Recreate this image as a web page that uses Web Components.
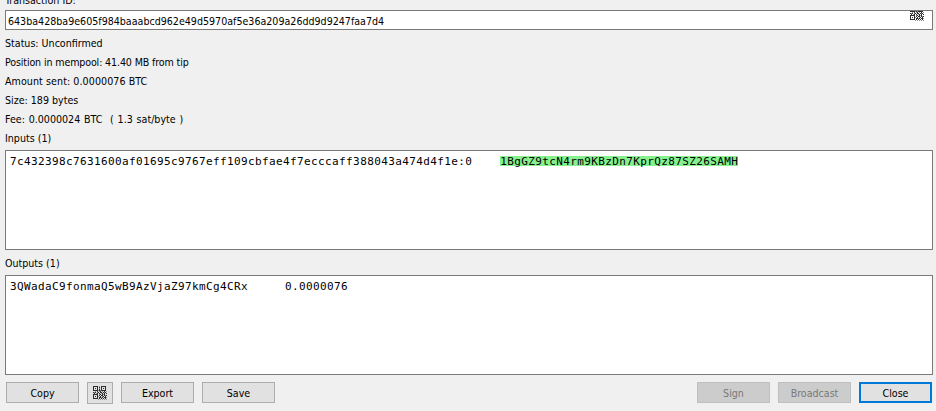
<!DOCTYPE html>
<html>
<head>
<meta charset="utf-8">
<title>Transaction</title>
<style>
  html, body { margin: 0; padding: 0; background: #f0f0f0; overflow: hidden; }
</style>
</head>
<body>
<tx-dialog></tx-dialog>

<script>
const UI_FONT = `"DejaVu Sans", "Liberation Sans", sans-serif`
const MONO_FONT = `"DejaVu Sans Mono", "Liberation Mono", monospace`

class QrIcon extends HTMLElement {
  constructor() {
    super()
    this._shadowRoot = this.attachShadow({ mode: 'open' })
  }

  connectedCallback() {
    // 14x14 pattern, one char per pixel: # dark, + mid grey, . empty
    const rows = [
      '#####.+.#####.',
      '#...#.#.#...#.',
      '#.#.#.+.#.#.#.',
      '#...#.#.#...#.',
      '#####+#+#####.',
      '..+.#.+#.+.#.+',
      '#+#.+#.##.#+#.',
      '.#.+#.#.+#.#.#',
      '#####.+#.#+#..',
      '#...#.#.##.#+#',
      '#.#.#+.#.+#.#.',
      '#...#.##+#.##+',
      '#####.#.#.#.#.',
      '.....+.+.+.+.+'
    ]
    let rects = ''
    rows.forEach((row, y) => {
      row.split('').forEach((c, x) => {
        if (c === '#') rects += `<rect x="${x}" y="${y}" width="1" height="1" fill="#2b2b2b"/>`
        if (c === '+') rects += `<rect x="${x}" y="${y}" width="1" height="1" fill="#8f8f8f"/>`
      })
    })
    this._shadowRoot.innerHTML = `
      <style>
        :host { display: block; width: 14px; height: 14px; }
        svg { display: block; }
      </style>
      <svg width="14" height="14" viewBox="0 0 14 14" shape-rendering="crispEdges">${rects}</svg>
    `
  }
}

class DlgButton extends HTMLElement {
  constructor() {
    super()
    this._shadowRoot = this.attachShadow({ mode: 'open' })
  }

  connectedCallback() {
    this._shadowRoot.innerHTML = `
      <style>
        :host {
          display: flex;
          align-items: center;
          justify-content: center;
          box-sizing: border-box;
          width: 73px;
          height: 21px;
          padding-top: 1px;
          background: #e1e1e1;
          border: 1px solid #adadad;
          color: #000;
          font: 10.6px ${UI_FONT};
          font-stretch: condensed;
        }
        :host([disabled]) {
          background: #cccccc;
          border-color: #bfbfbf;
          color: #787878;
        }
        :host([focused]) {
          border: 2px solid #0078d7;
        }
        :host([icon]) {
          width: 26px;
          height: 22px;
          padding-top: 0;
        }
      </style>
      <slot></slot>
    `
  }
}

class TextLine extends HTMLElement {
  constructor() {
    super()
    this._shadowRoot = this.attachShadow({ mode: 'open' })
  }

  connectedCallback() {
    this._shadowRoot.innerHTML = `
      <style>
        :host {
          display: block;
          height: 19px;
          color: #000;
          font: 10.6px/19px ${UI_FONT};
          font-stretch: condensed;
        }
        .line { white-space: pre; }
      </style>
      <div class="line"><slot></slot></div>
    `
  }
}

class TxField extends HTMLElement {
  constructor() {
    super()
    this._shadowRoot = this.attachShadow({ mode: 'open' })
  }

  connectedCallback() {
    this._shadowRoot.innerHTML = `
      <style>
        :host {
          display: block;
          position: relative;
          box-sizing: border-box;
          height: 20px;
          border: 1px solid #7a7a7a;
          background: #fff;
          overflow: hidden;
          padding-left: 2px;
          font: 10.6px/20px ${UI_FONT};
          font-stretch: condensed;
          color: #000;
        }
        qr-icon { position: absolute; right: 8px; top: -4px; }
      </style>
      <slot></slot>
      <qr-icon></qr-icon>
    `
  }
}

class TxList extends HTMLElement {
  constructor() {
    super()
    this._shadowRoot = this.attachShadow({ mode: 'open' })
  }

  connectedCallback() {
    this._shadowRoot.innerHTML = `
      <style>
        :host {
          display: block;
          box-sizing: border-box;
          height: 100px;
          border: 1px solid #7a7a7a;
          background: #fff;
          padding: 5px 4px 4px;
          font: 11px/11px ${MONO_FONT};
          letter-spacing: 0.38px;
          color: #000;
        }
        .rows { white-space: pre; }
      </style>
      <div class="rows"><slot></slot></div>
    `
  }
}

class TxDialog extends HTMLElement {
  constructor() {
    super()
    this._shadowRoot = this.attachShadow({ mode: 'open' })
  }

  connectedCallback() {
    this.render()
  }

  render() {
    const txid = '643ba428ba9e605f984baaabcd962e49d5970af5e36a209a26dd9d9247faa7d4'
    const prevout = '7c432398c7631600af01695c9767eff109cbfae4f7ecccaff388043a474d4f1e:0'
    this._shadowRoot.innerHTML = `
      <style>
        :host {
          display: flex;
          flex-direction: column;
          justify-content: flex-end;
          box-sizing: border-box;
          width: 936px;
          height: 411px;
          padding: 0 3px 7px 5px;
          overflow: hidden;
          background: #f0f0f0;
        }
        .info { margin-top: 4px; flex: none; }
        tx-list { margin-top: 2px; flex: none; }
        tx-field, text-line { flex: none; }
        .outputs-label { margin-top: 4px; }
        .buttons {
          display: flex;
          align-items: flex-start;
          flex: none;
          height: 22px;
          margin-top: 7px;
          padding: 0 1px;
          gap: 8px;
        }
        .spacer { flex: 1; }
        .addr {
          display: inline-block;
          height: 10px;
          background: #86f08f;
        }
        .amount { margin-left: 37px; }
      </style>
      <text-line>Transaction ID:</text-line>
      <tx-field>${txid}</tx-field>
      <div class="info">
        <text-line>Status: Unconfirmed</text-line>
        <text-line style="letter-spacing: -0.13px">Position in mempool: 41.40 MB from tip</text-line>
        <text-line style="letter-spacing: 0.08px">Amount sent: 0.0000076 BTC</text-line>
        <text-line>Size: 189 bytes</text-line>
        <text-line style="word-spacing: 0.8px">Fee: 0.0000024 BTC  ( 1.3 sat/byte )</text-line>
        <text-line>Inputs (1)</text-line>
      </div>
      <tx-list>${prevout}    <span class="addr">1BgGZ9tcN4rm9KBzDn7KprQz87SZ26SAMH</span></tx-list>
      <text-line class="outputs-label">Outputs (1)</text-line>
      <tx-list>3QWadaC9fonmaQ5wB9AzVjaZ97kmCg4CRx<span class="amount">0.0000076</span></tx-list>
      <div class="buttons">
        <dlg-button>Copy</dlg-button>
        <dlg-button icon><qr-icon></qr-icon></dlg-button>
        <dlg-button>Export</dlg-button>
        <dlg-button>Save</dlg-button>
        <div class="spacer"></div>
        <dlg-button disabled>Sign</dlg-button>
        <dlg-button disabled>Broadcast</dlg-button>
        <dlg-button focused>Close</dlg-button>
      </div>
    `
  }
}

customElements.define('qr-icon', QrIcon)
customElements.define('dlg-button', DlgButton)
customElements.define('text-line', TextLine)
customElements.define('tx-field', TxField)
customElements.define('tx-list', TxList)
customElements.define('tx-dialog', TxDialog)
</script>
</body>
</html>
